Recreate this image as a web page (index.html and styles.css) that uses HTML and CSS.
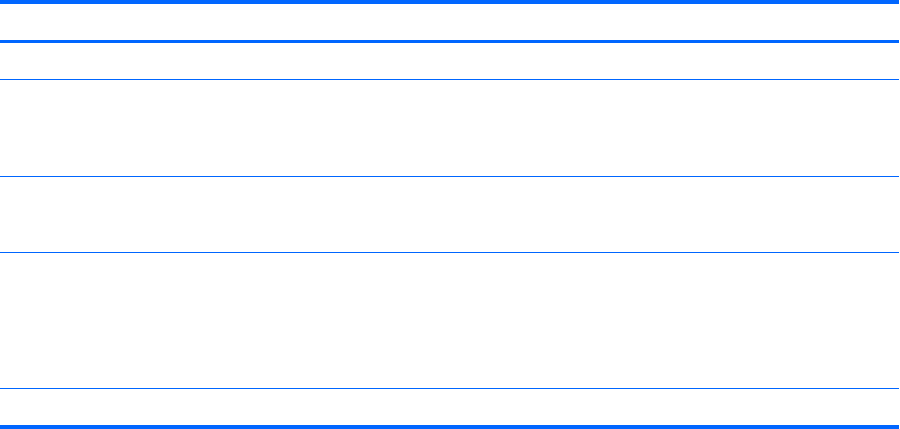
FILE: index.html
```html
<!DOCTYPE html>
<html>
<head>
<meta charset="utf-8">
<link rel="stylesheet" href="styles.css">
</head>
<body>
<div class="table">
  <div class="row head"></div>
  <div class="row r1"></div>
  <div class="row r2"></div>
  <div class="row r3"></div>
  <div class="row r4"></div>
  <div class="row r5"></div>
</div>
</body>
</html>
```
FILE: styles.css
```css
html, body {
  margin: 0;
  padding: 0;
  background: #ffffff;
}
.table {
  width: 899px;
  display: flex;
  flex-direction: column;
  border-top: 4px solid #0066ff;
  border-bottom: 4px solid #0066ff;
}
.row {
  border-bottom: 1px solid #0066ff;
}
.row:last-child {
  border-bottom: none;
}
.head {
  height: 36px;
  border-bottom: 3px solid #0066ff;
}
.r1 { height: 36px; }
.r2 { height: 96px; }
.r3 { height: 75px; }
.r4 { height: 135px; }
.r5 { height: 36px; }
```
